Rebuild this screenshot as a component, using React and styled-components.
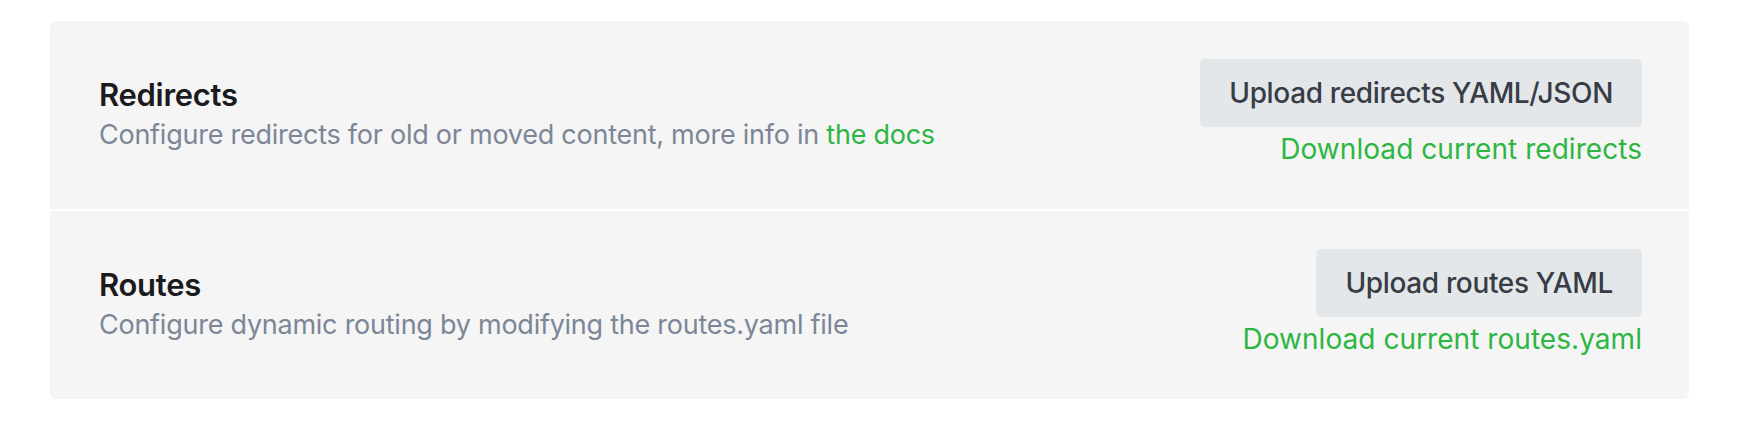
import React from "react";
import styled, { createGlobalStyle } from "styled-components";

const GlobalStyle = createGlobalStyle`
  body {
    margin: 0;
    background: #ffffff;
    font-family: Inter, "Noto Sans", sans-serif;
  }
`;

const sections = [
  {
    title: "Redirects",
    text: "Configure redirects for old or moved content, more info in ",
    docs: "the docs",
    upload: "Upload redirects YAML/JSON",
    download: "Download current redirects",
  },
  {
    title: "Routes",
    text: "Configure dynamic routing by modifying the routes.yaml file",
    upload: "Upload routes YAML",
    download: "Download current routes.yaml",
  },
];

const App = () => {
  return (
    <>
      <GlobalStyle />
      <Page>
        <Card>
          {sections.map((s) => (
            <Section key={s.title}>
              <Info>
                <Title>{s.title}</Title>
                <Description>
                  {s.text}
                  {s.docs && <DocsLink href="#">{s.docs}</DocsLink>}
                </Description>
              </Info>
              <Actions>
                <UploadButton>{s.upload}</UploadButton>
                <DownloadLink href="#">{s.download}</DownloadLink>
              </Actions>
            </Section>
          ))}
        </Card>
      </Page>
    </>
  );
};

export default App;

const Page = styled.div`
  padding: 21px 49px 0 50px;
`;

const Card = styled.div`
  display: flex;
  flex-direction: column;
  gap: 2px;
  border-radius: 6px;
  overflow: hidden;
`;

const Section = styled.div`
  display: flex;
  align-items: center;
  justify-content: space-between;
  height: 188px;
  padding: 0 47px 0 49px;
  box-sizing: border-box;
  background: #f5f5f5;
`;

const Info = styled.div`
  display: flex;
  flex-direction: column;
`;

const Title = styled.h3`
  margin: 0;
  font-size: 31px;
  line-height: 40px;
  font-weight: 600;
  letter-spacing: -0.3px;
  color: #1b1b1d;
`;

const Description = styled.p`
  margin: 0;
  font-size: 27px;
  line-height: 40px;
  font-weight: 400;
  letter-spacing: -0.25px;
  color: #7b8797;
`;

const DocsLink = styled.a`
  color: #2db642;
  text-decoration: none;
`;

const Actions = styled.div`
  display: flex;
  flex-direction: column;
  align-items: flex-end;
  gap: 2px;
  padding-bottom: 2px;
`;

const UploadButton = styled.button`
  height: 68px;
  padding: 0 29px;
  border: 0;
  border-radius: 5px;
  background: #e3e7ea;
  color: #373c45;
  font-family: Inter, "Noto Sans", sans-serif;
  font-size: 28px;
  font-weight: 500;
  letter-spacing: -0.35px;
  cursor: pointer;
`;

const DownloadLink = styled.a`
  font-size: 28px;
  line-height: 40px;
  letter-spacing: 0.05px;
  color: #2db642;
  text-decoration: none;
`;
